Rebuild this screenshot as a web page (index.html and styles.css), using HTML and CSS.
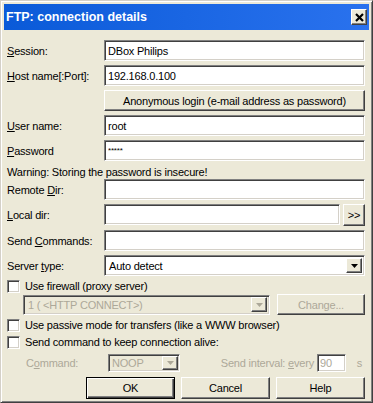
FILE: index.html
```html
<!DOCTYPE html>
<html lang="en">
<head>
    <meta charset="UTF-8">
    <title>FTP: connection details</title>
    <link rel="stylesheet" href="styles.css">
</head>
<body>
    <div class="Dialog">
        <div class="Dialog-title">
            <span class="Dialog-caption">FTP: connection details</span>
            <button class="Dialog-close" type="button">
                <svg width="9" height="9" viewBox="0 0 9 9"><path d="M1 1L8 8M8 1L1 8" stroke="#000" stroke-width="2.2"/></svg>
            </button>
        </div>

        <div class="Dialog-body">
            <div class="Form">
                <label class="Form-label"><u>S</u>ession:</label>
                <input class="Field" type="text" value="DBox Philips">

                <label class="Form-label"><u>H</u>ost name[:Port]:</label>
                <input class="Field" type="text" value="192.168.0.100">

                <span></span>
                <button class="Btn Btn--anon" type="button">Anonymous login (e-mail address as password)</button>

                <label class="Form-label"><u>U</u>ser name:</label>
                <input class="Field" type="text" value="root">

                <label class="Form-label"><u>P</u>assword</label>
                <input class="Field Field--pw" type="text" value="*****">

                <div class="Form-warning">Warning: Storing the password is insecure!</div>

                <label class="Form-label">Remote <u>D</u>ir:</label>
                <input class="Field" type="text" value="">

                <label class="Form-label"><u>L</u>ocal dir:</label>
                <div class="Form-pair">
                    <input class="Field" type="text" value="">
                    <button class="Btn Btn--small" type="button">&gt;&gt;</button>
                </div>

                <label class="Form-label">Send <u>C</u>ommands:</label>
                <input class="Field" type="text" value="">

                <label class="Form-label">Server <u>t</u>ype:</label>
                <div class="Combo">
                    <span class="Combo-text">Auto detect</span>
                    <span class="Combo-arrow"><svg width="7" height="4" viewBox="0 0 7 4"><path d="M0 0H7L3.5 4Z" fill="#000"/></svg></span>
                </div>
            </div>

            <div class="Check Check--first">
                <span class="Check-box"></span>
                <span>Use firewall (proxy server)</span>
            </div>

            <div class="Proxy">
                <div class="Combo Combo--disabled Proxy-combo">
                    <span class="Combo-text">1 ( &lt;HTTP CONNECT&gt;)</span>
                    <span class="Combo-arrow"><svg width="7" height="4" viewBox="0 0 7 4"><path d="M0 0H7L3.5 4Z" fill="#aca899"/></svg></span>
                </div>
                <button class="Btn Btn--disabled Proxy-change" type="button">Change...</button>
            </div>

            <div class="Check">
                <span class="Check-box"></span>
                <span>Use passive mode for transfers (like a WWW browser)</span>
            </div>

            <div class="Check">
                <span class="Check-box"></span>
                <span>Send command to keep connection alive:</span>
            </div>

            <div class="Keep">
                <span class="Keep-label">C<u>o</u>mmand:</span>
                <div class="Combo Combo--disabled Keep-combo">
                    <span class="Combo-text">NOOP</span>
                    <span class="Combo-arrow"><svg width="7" height="4" viewBox="0 0 7 4"><path d="M0 0H7L3.5 4Z" fill="#aca899"/></svg></span>
                </div>
                <span class="Keep-interval">Send interval: <u>e</u>very</span>
                <input class="Field Field--disabled Keep-num" type="text" value="90">
                <span class="Keep-unit">s</span>
            </div>

            <div class="Actions">
                <button class="Btn Btn--default" type="button">OK</button>
                <button class="Btn" type="button">Cancel</button>
                <button class="Btn" type="button">Help</button>
            </div>
        </div>
    </div>
</body>
</html>
```

FILE: styles.css
```css
* {
    margin: 0;
    padding: 0;
    box-sizing: border-box;
}

html, body {
    width: 373px;
    height: 403px;
    background: #ece9d8;
    font-family: 'Liberation Sans', Arial, sans-serif;
    font-size: 11px;
    letter-spacing: -0.2px;
    color: #000;
    overflow: hidden;
}

u {
    text-decoration: underline;
    text-underline-offset: 1px;
}

.Dialog {
    width: 373px;
    height: 403px;
    border: 1px solid #d4d0c8;
    border-right-color: #404040;
    border-bottom-color: #404040;
    box-shadow: inset 1px 1px 0 #fff, inset -1px -1px 0 #808080;
    padding: 3px;
    display: flex;
    flex-direction: column;
}

.Dialog-title {
    height: 26px;
    display: flex;
    align-items: center;
    justify-content: space-between;
    padding: 0 2px 0 2px;
    background: linear-gradient(to right, #0a5ad8, #2a72ee);
}

.Dialog-caption {
    color: #fff;
    font-weight: bold;
    font-size: 12.5px;
    letter-spacing: 0;
}

.Dialog-close {
    width: 16px;
    height: 16px;
    display: flex;
    align-items: center;
    justify-content: center;
    background: #ece9d8;
    border: 1px solid;
    border-color: #fff #404040 #404040 #fff;
    box-shadow: inset -1px -1px 0 #808080;
}

.Dialog-body {
    padding: 10px 4px 0 3px;
    display: flex;
    flex-direction: column;
}

.Form {
    display: grid;
    grid-template-columns: 97px 1fr;
    row-gap: 4px;
    align-items: center;
}

.Form-label {
    white-space: nowrap;
}

.Form-warning {
    grid-column: 1 / 3;
    height: 11px;
    line-height: 11px;
    margin-top: 2px;
    margin-bottom: -3px;
}

.Form-pair {
    display: flex;
    gap: 3px;
}

.Form-pair .Field {
    flex: 1;
}

.Field {
    height: 21px;
    width: 100%;
    border: 1px solid;
    border-color: #808080 #fff #fff #808080;
    box-shadow: inset 1px 1px 0 #404040, inset -1px -1px 0 #d4d0c8;
    background: #fff;
    padding: 0 3px;
    font-family: inherit;
    font-size: 11px;
    letter-spacing: -0.2px;
    color: #000;
    outline: none;
}

.Field--pw {
    font-size: 8px;
}

.Field--disabled {
    background: #fff;
    color: #aca899;
}

.Btn {
    height: 22px;
    background: #ece9d8;
    border: 1px solid;
    border-color: #fff #404040 #404040 #fff;
    box-shadow: inset -1px -1px 0 #808080;
    font-family: inherit;
    font-size: 11px;
    letter-spacing: -0.2px;
    color: #000;
}

.Btn--anon {
    height: 21px;
}

.Btn--small {
    width: 22px;
}

.Btn--disabled {
    color: #aca899;
}

.Btn--default {
    border: 1px solid #000;
    box-shadow: inset 1px 1px 0 #fff, inset -1px -1px 0 #404040, inset -2px -2px 0 #808080;
}

.Combo {
    height: 21px;
    display: flex;
    align-items: center;
    justify-content: space-between;
    border: 1px solid;
    border-color: #808080 #fff #fff #808080;
    box-shadow: inset 1px 1px 0 #404040, inset -1px -1px 0 #d4d0c8;
    background: #fff;
    padding: 2px 2px 2px 4px;
}

.Combo-arrow {
    width: 16px;
    height: 15px;
    display: flex;
    align-items: center;
    justify-content: center;
    background: #ece9d8;
    border: 1px solid;
    border-color: #fff #404040 #404040 #fff;
    box-shadow: inset -1px -1px 0 #808080;
}

.Combo--disabled {
    background: #ece9d8;
    color: #aca899;
}

.Check {
    display: flex;
    align-items: center;
    gap: 5px;
    height: 14px;
    margin-top: 3px;
}

.Check-box {
    width: 13px;
    height: 13px;
    background: #fff;
    border: 1px solid;
    border-color: #808080 #fff #fff #808080;
    box-shadow: inset 1px 1px 0 #404040, inset -1px -1px 0 #d4d0c8;
}

.Proxy {
    display: flex;
    align-items: center;
    gap: 7px;
    padding-left: 16px;
    margin-top: 1px;
}

.Proxy-combo {
    width: 247px;
    height: 20px;
}

.Proxy-change {
    flex: 1;
    height: 21px;
}

.Keep {
    display: flex;
    align-items: center;
    height: 18px;
    margin-top: 5px;
    color: #aca899;
}

.Keep-label {
    width: 101px;
    padding-left: 19px;
}

.Keep-combo {
    width: 72px;
    height: 18px;
    padding: 1px 1px 1px 3px;
}

.Keep-combo .Combo-arrow {
    height: 14px;
}

.Keep-interval {
    flex: 1;
    text-align: right;
    padding-right: 3px;
}

.Keep-num {
    width: 29px;
    height: 18px;
    padding: 0 2px;
}

.Keep-unit {
    width: 19px;
    text-align: right;
    padding-right: 3px;
}

.Actions {
    display: flex;
    justify-content: flex-end;
    gap: 6px;
    margin-top: 5px;
}

.Actions .Btn {
    width: 89px;
    height: 22px;
}
```
